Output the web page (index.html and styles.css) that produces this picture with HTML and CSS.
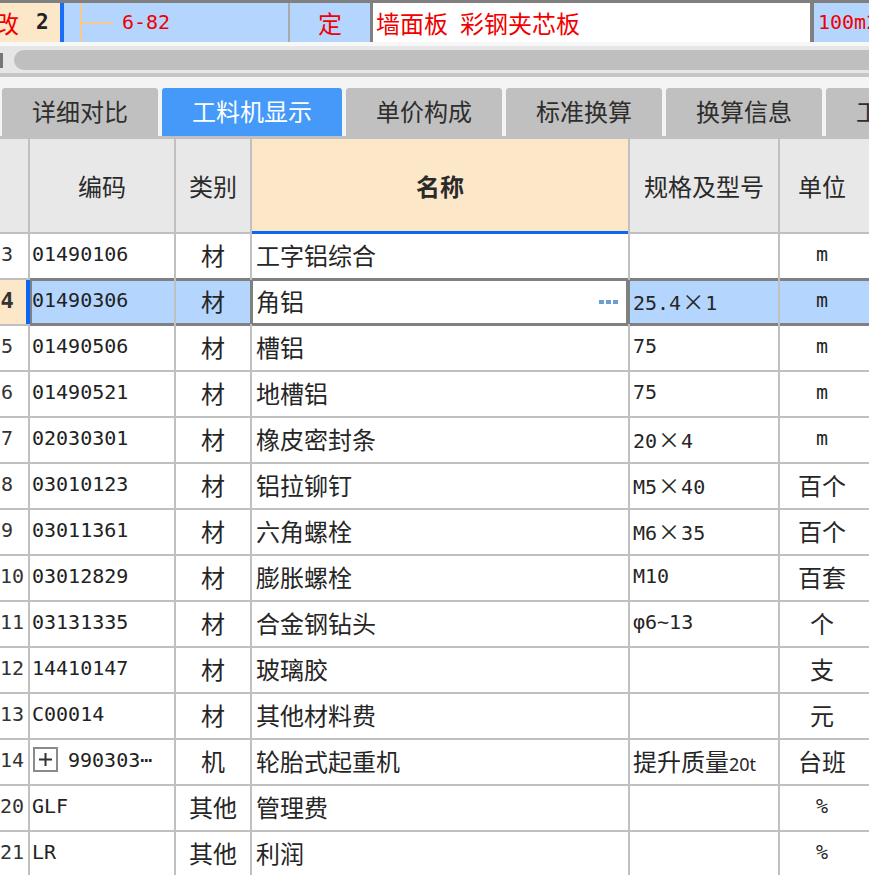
FILE: index.html
```html
<!DOCTYPE html>
<html lang="zh-CN">
<head>
<meta charset="utf-8">
<title>工料机显示</title>
<link rel="stylesheet" href="styles.css">
</head>
<body>
<div class="top">
  <div class="t-num"><span class="gai">改</span><b class="mono two">2</b></div>
  <div class="t-code"><span class="tree"></span><span class="mono red">6-82</span></div>
  <div class="t-type red">定</div>
  <div class="t-name red">墙面板<span class="sp"></span>彩钢夹芯板</div>
  <div class="t-unit mono red">100m2</div>
</div>
<div class="gapline"></div>
<div class="hscroll"><div class="arrow"></div><div class="thumb"></div></div>
<div class="tabbar">
  <div class="tab w4">详细对比</div>
  <div class="tab w5 active">工料机显示</div>
  <div class="tab w4">单价构成</div>
  <div class="tab w4">标准换算</div>
  <div class="tab w4">换算信息</div>
  <div class="tab w4">工作内容</div>
</div>
<div class="grid">
  <div class="h"></div>
  <div class="h">编码</div>
  <div class="h">类别</div>
  <div class="h hname">名称</div>
  <div class="h">规格及型号</div>
  <div class="h hunit">单位</div>

  <div class="c n">3</div><div class="c code mono">01490106</div><div class="c cat">材</div><div class="c name">工字铝综合</div><div class="c spec"></div><div class="c unit mono">m</div>

  <div class="c n nsel">4</div><div class="c code mono sel first">01490306</div><div class="c cat sel">材</div><div class="c name sel edit"><span class="etxt">角铝</span><span class="dots"><i></i><i></i><i></i></span></div><div class="c spec sel mono">25.4<span class="x">×</span>1</div><div class="c unit mono sel">m</div>

  <div class="c n">5</div><div class="c code mono">01490506</div><div class="c cat">材</div><div class="c name">槽铝</div><div class="c spec mono">75</div><div class="c unit mono">m</div>

  <div class="c n">6</div><div class="c code mono">01490521</div><div class="c cat">材</div><div class="c name">地槽铝</div><div class="c spec mono">75</div><div class="c unit mono">m</div>

  <div class="c n">7</div><div class="c code mono">02030301</div><div class="c cat">材</div><div class="c name">橡皮密封条</div><div class="c spec mono">20<span class="x">×</span>4</div><div class="c unit mono">m</div>

  <div class="c n">8</div><div class="c code mono">03010123</div><div class="c cat">材</div><div class="c name">铝拉铆钉</div><div class="c spec mono">M5<span class="x">×</span>40</div><div class="c unit">百个</div>

  <div class="c n">9</div><div class="c code mono">03011361</div><div class="c cat">材</div><div class="c name">六角螺栓</div><div class="c spec mono">M6<span class="x">×</span>35</div><div class="c unit">百个</div>

  <div class="c n">10</div><div class="c code mono">03012829</div><div class="c cat">材</div><div class="c name">膨胀螺栓</div><div class="c spec mono">M10</div><div class="c unit">百套</div>

  <div class="c n">11</div><div class="c code mono">03131335</div><div class="c cat">材</div><div class="c name">合金钢钻头</div><div class="c spec mono">φ6~13</div><div class="c unit">个</div>

  <div class="c n">12</div><div class="c code mono">14410147</div><div class="c cat">材</div><div class="c name">玻璃胶</div><div class="c spec"></div><div class="c unit">支</div>

  <div class="c n">13</div><div class="c code mono">C00014</div><div class="c cat">材</div><div class="c name">其他材料费</div><div class="c spec"></div><div class="c unit">元</div>

  <div class="c n">14</div><div class="c code mono"><span class="plus"><svg width="21" height="21" viewBox="0 0 21 21"><path d="M4 10.5h13M10.5 4v13" stroke="#333" stroke-width="2" fill="none"/></svg></span>990303⋯</div><div class="c cat">机</div><div class="c name">轮胎式起重机</div><div class="c spec">提升质量<span class="sm">20t</span></div><div class="c unit">台班</div>

  <div class="c n">20</div><div class="c code mono">GLF</div><div class="c cat">其他</div><div class="c name">管理费</div><div class="c spec"></div><div class="c unit mono">%</div>

  <div class="c n">21</div><div class="c code mono">LR</div><div class="c cat">其他</div><div class="c name">利润</div><div class="c spec"></div><div class="c unit mono">%</div>
</div>
</body>
</html>
```
FILE: styles.css
```css
html, body {
  margin: 0;
  padding: 0;
  background: #ffffff;
  overflow: hidden;
}
body {
  width: 869px;
  height: 875px;
  font-family: "Noto Sans CJK SC", "Noto Sans", sans-serif;
  font-size: 24px;
  color: #262626;
}
.mono {
  font-family: "DejaVu Sans Mono", "Liberation Mono", "Noto Sans CJK SC", monospace;
  font-size: 20px;
}
.red { color: #f00000; }

/* top (upper grid, partial row) */
.top {
  display: flex;
  height: 39px;
  border-top: 3px solid #808080;
  line-height: 39px;
  white-space: nowrap;
  overflow: hidden;
}
.t-num {
  box-sizing: border-box;
  width: 64px;
  flex: none;
  background: #fde7c9;
  border-right: 4px solid #1a6ef5;
  display: flex;
  gap: 17px;
}
.gai { color: #f00000; margin-left: -5px; }
.two { font-weight: bold; color: #222; font-size: 21px; }
.t-code {
  width: 224px;
  flex: none;
  background: #b4d6fe;
  display: flex;
  align-items: center;
}
.tree {
  align-self: stretch;
  width: 31px;
  margin-left: 16px;
  border-left: 2px solid #f7c88f;
  background: linear-gradient(#f7c88f, #f7c88f) no-repeat 0 50% / 100% 2px;
}
.t-code .mono { margin-left: 9px; }
.t-type {
  width: 80px;
  flex: none;
  border-left: 2px solid #a9a9a9;
  background: #b4d6fe;
  text-align: center;
}
.t-name {
  box-sizing: border-box;
  width: 440px;
  flex: none;
  border-left: 3px solid #808080;
  background: #ffffff;
  padding-left: 3px;
}
.sp { display: inline-block; width: 12px; }
.t-unit {
  flex: 1;
  border-left: 4px solid #808080;
  background: #b4d6fe;
  padding-left: 4px;
}

.gapline { height: 4px; background: #f7f7f7; }

/* horizontal scrollbar */
.hscroll {
  height: 20px;
  padding: 4px 0 3px 0;
  background: #e6e6e6;
  display: flex;
  align-items: center;
}
.arrow {
  width: 3px;
  height: 15px;
  background: #777777;
  margin-right: 11px;
}
.thumb {
  flex: 1;
  height: 20px;
  background: #bfbfbf;
  border-radius: 10px 0 0 10px;
}

/* tabs */
.tabbar {
  border-top: 4px solid #c6c6c6;
  background: #f4f4f4;
  padding: 11px 0 0 2px;
  display: flex;
  gap: 4px;
  border-bottom: 3px solid #c0c0c0;
  overflow: hidden;
}
.tab {
  flex: none;
  height: 48px;
  line-height: 46px;
  text-align: center;
  background: #c0c0c0;
  color: #2e2e2e;
  border-radius: 3px 3px 0 0;
  white-space: nowrap;
}
.w4 { width: 156px; }
.w5 { width: 180px; }
.tab.active { background: #4599f9; color: #ffffff; }

/* lower grid */
.grid {
  display: grid;
  grid-template-columns: 28px 144px 74px 376px 148px 89px;
  grid-template-rows: 93px;
  grid-auto-rows: 44px;
  gap: 2px;
  background: #c0c0c0;
}
.h {
  background: #e8e8e8;
  display: flex;
  align-items: center;
  justify-content: center;
  color: #2a2a2a;
}
.hname {
  background: #fde7c9;
  font-weight: bold;
  box-shadow: 0 2px 0 #0a66f5, inset 0 -1px 0 #0a66f5;
}
.hunit { padding-right: 5px; }
.c {
  background: #ffffff;
  line-height: 41px;
  white-space: nowrap;
  overflow: hidden;
}
.n {
  text-align: center;
  padding-right: 14px;
  overflow: visible;
  font-family: "DejaVu Sans Mono", "Liberation Mono", monospace;
  font-size: 20px;
  color: #333;
}
.nsel {
  background: #fde7c9;
  font-weight: bold;
  position: relative;
  font-size: 22px;
}
.nsel::after {
  content: "";
  position: absolute;
  right: -2px;
  top: 0;
  bottom: 0;
  width: 4px;
  background: #0a66f5;
}
.code { padding-left: 2px; color: #222; }
.cat { text-align: center; }
.name { padding-left: 4px; }
.spec { padding-left: 3px; }
.unit { text-align: center; padding-right: 5px; }
.x {
  display: inline-block;
  width: 24px;
  text-align: center;
  font-family: "Noto Sans CJK SC", sans-serif;
  font-size: 22px;
}
.sm {
  font-family: "Noto Sans", sans-serif;
  font-size: 18px;
}
.sel {
  background: #b4d6fe;
  box-shadow: 0 -2px 0 #808080, 0 2px 0 #808080, inset 0 1px 0 #808080, inset 0 -1px 0 #808080;
}
.sel.first {
  box-shadow: 0 -2px 0 #808080, 0 2px 0 #808080, inset 0 1px 0 #808080, inset 0 -1px 0 #808080, inset 2px 0 0 #808080;
}
.sel.edit {
  background: #ffffff;
  display: flex;
  justify-content: space-between;
  align-items: flex-start;
  padding-right: 10px;
  box-shadow: 0 -2px 0 #808080, 0 2px 0 #808080, -2px 0 0 #808080, 2px 0 0 #808080,
    inset 0 1px 0 #808080, inset 0 -1px 0 #808080, inset 1px 0 0 #808080, inset -2px 0 0 #808080;
}
.etxt { line-height: 41px; }
.dots { display: flex; gap: 2px; align-self: center; }
.dots i {
  display: block;
  width: 5px;
  height: 4px;
  background: #6a9fd6;
}
.plus {
  display: inline-flex;
  box-sizing: border-box;
  width: 25px;
  height: 25px;
  border: 2px solid #8a8a8a;
  vertical-align: middle;
  margin: -4px 10px 0 1px;
  align-items: center;
  justify-content: center;
}
.plus svg { display: block; }
```
